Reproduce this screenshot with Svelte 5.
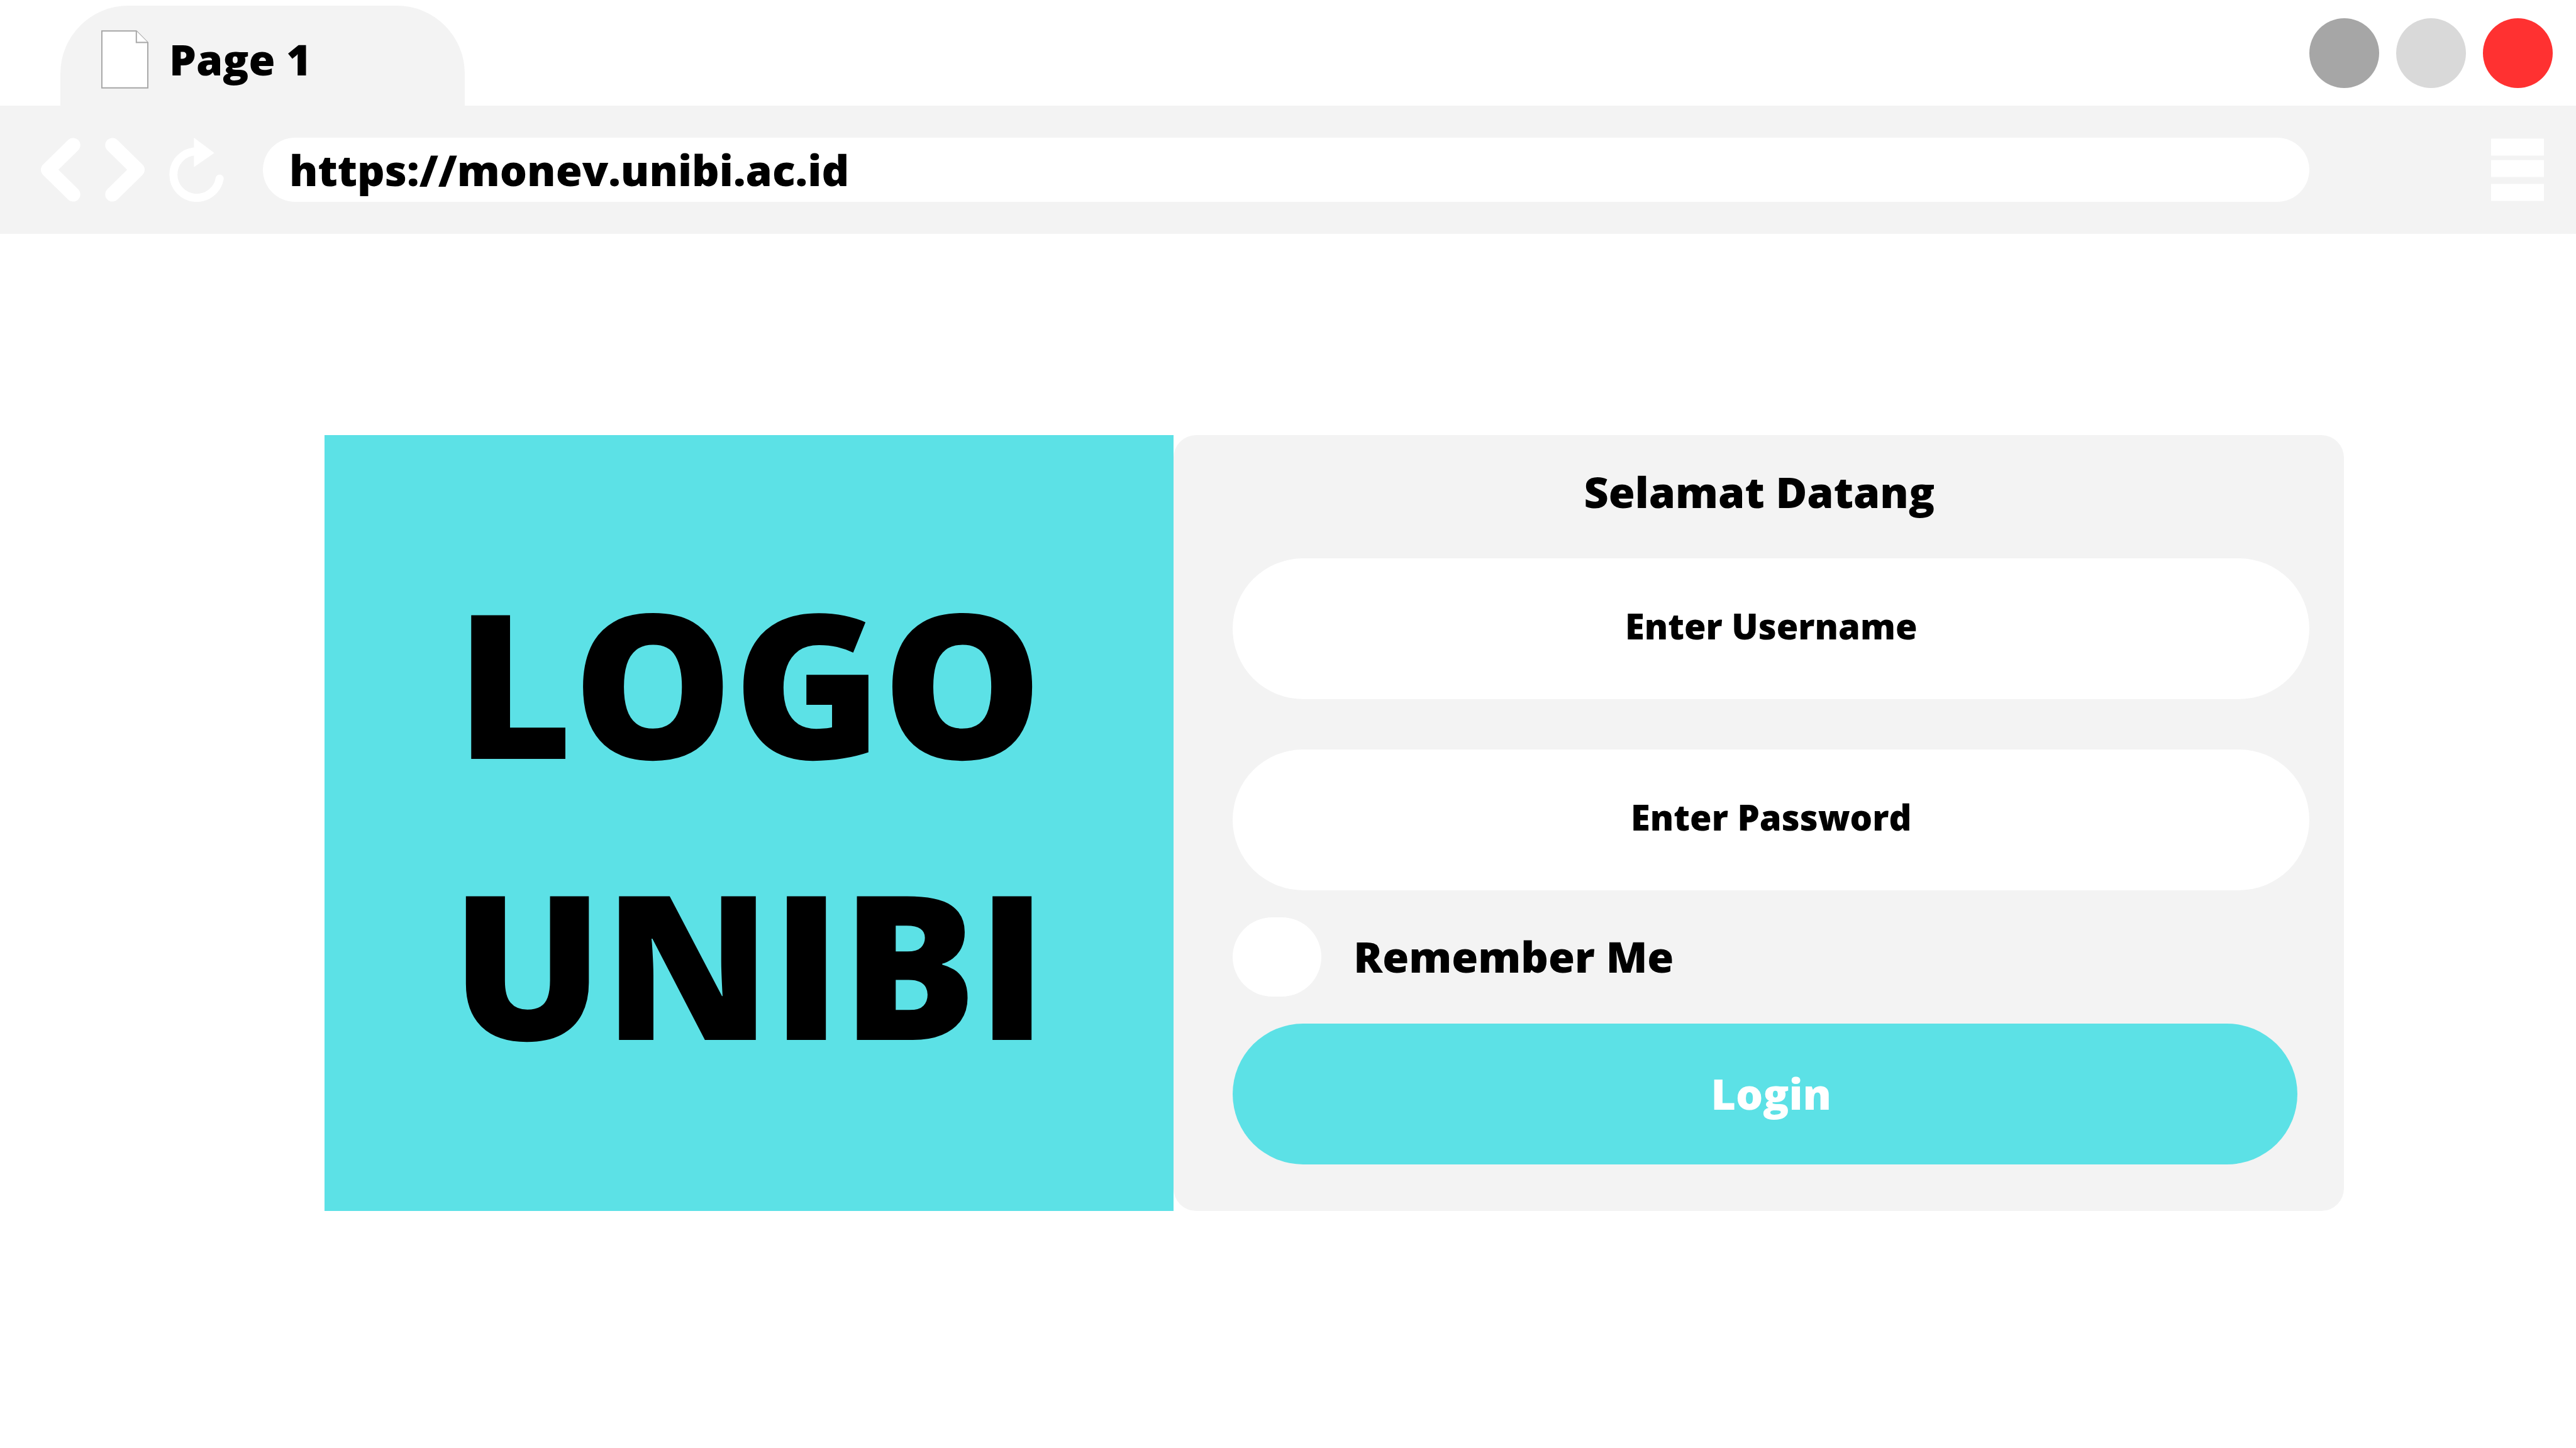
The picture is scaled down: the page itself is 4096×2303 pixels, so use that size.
<script>
  let address = $state('https://monev.unibi.ac.id');
  let username = $state('');
  let password = $state('');
  let remember = $state(false);
</script>

<div class="browser">
  <header>
    <div class="tabs">
      <button class="tab" type="button">
        <svg class="page-icon" viewBox="0 0 78 96" aria-hidden="true">
          <path d="M1 1H58L77 20V95H1Z" />
          <path d="M58 1V20H77" />
        </svg>
        <span>Page 1</span>
      </button>
      <div class="window-controls">
        <button class="dot minimize" type="button" aria-label="Minimize"></button>
        <button class="dot maximize" type="button" aria-label="Maximize"></button>
        <button class="dot close" type="button" aria-label="Close"></button>
      </div>
    </div>

    <nav class="toolbar" aria-label="Browser">
      <div class="nav-buttons">
        <button type="button" aria-label="Back">
          <svg class="chevron" viewBox="0 0 66 106"><path d="M53.7 12L12 53L53.7 94" /></svg>
        </button>
        <button type="button" aria-label="Forward">
          <svg class="chevron" viewBox="0 0 66 106"><path d="M12.3 12L54 53L12.3 94" /></svg>
        </button>
        <button type="button" aria-label="Reload">
          <svg class="reload" viewBox="0 0 90.4 106">
            <path class="arc" d="M41 22.7A38.5 38.5 0 1 0 83.4 67.7" />
            <path class="head" d="M41 0L74.6 25.3L41 48.7Z" />
          </svg>
        </button>
      </div>
      <input class="address" type="text" aria-label="Address" bind:value={address} />
      <button type="button" aria-label="Menu">
        <svg class="menu" viewBox="0 0 84 102">
          <rect y="1.5" width="84" height="27" />
          <rect y="35.5" width="84" height="27" />
          <rect y="73.5" width="84" height="27" />
        </svg>
      </button>
    </nav>
  </header>

  <main>
    <div class="logo">LOGO<br />UNIBI</div>
    <form class="panel" onsubmit={(e) => e.preventDefault()}>
      <h1>Selamat Datang</h1>
      <div class="fields">
        <input class="field" type="text" placeholder="Enter Username" aria-label="Enter Username" bind:value={username} />
        <input class="field" type="password" placeholder="Enter Password" aria-label="Enter Password" bind:value={password} />
      </div>
      <label class="remember">
        <input type="checkbox" bind:checked={remember} />
        <span>Remember Me</span>
      </label>
      <button class="login" type="submit">Login</button>
    </form>
  </main>
</div>

<style>
  :global(body) {
    margin: 0;
    background: #fff;
  }

  .browser {
    min-height: 100vh;
    color: #000;
    font-family: 'Open Sans', sans-serif;
    font-size: 68px;
    font-weight: 800;
    line-height: 96px;
  }

  button,
  input {
    box-sizing: border-box;
    margin: 0;
    padding: 0;
    border: 0;
    background: none;
    color: inherit;
    font: inherit;
  }

  button {
    cursor: pointer;
  }

  svg {
    display: block;
  }

  .tabs {
    display: flex;
    justify-content: space-between;
    align-items: flex-end;
    padding: 9px 37px 0 96px;
  }

  .tab {
    display: flex;
    align-items: center;
    gap: 33px;
    width: 643px;
    height: 159px;
    padding: 11px 65px 0;
    border-radius: 108px 108px 0 0;
    background: #f3f3f3;
  }

  .page-icon {
    width: 75px;
    height: 93px;
    fill: #fff;
    stroke: #a6a6a6;
    stroke-width: 2;
  }

  .window-controls {
    display: flex;
    gap: 27px;
    padding-bottom: 28px;
  }

  .dot {
    width: 111px;
    height: 111px;
    border-radius: 50%;
  }

  .minimize {
    background: #a6a6a6;
  }

  .maximize {
    background: #d9d9d9;
  }

  .close {
    background: #ff3131;
  }

  .toolbar {
    display: flex;
    align-items: center;
    padding: 51px 51px 51px 65px;
    background: #f3f3f3;
  }

  .nav-buttons {
    display: flex;
    gap: 39px;
  }

  .chevron {
    width: 63px;
    height: 102px;
    fill: none;
    stroke: #fff;
    stroke-width: 24;
    stroke-linecap: round;
    stroke-linejoin: round;
  }

  .reload {
    width: 87px;
    height: 102px;
  }

  .arc {
    fill: none;
    stroke: #fff;
    stroke-width: 13.4;
    stroke-linecap: round;
  }

  .head,
  .menu {
    fill: #fff;
  }

  .menu {
    width: 84px;
    height: 102px;
  }

  .address {
    flex: 1;
    min-width: 0;
    height: 102px;
    margin: 0 289px 0 62px;
    padding: 0 42px 2px;
    border-radius: 51px;
    background: #fff;
  }

  main {
    display: grid;
    grid-template-columns: 1350fr 1861fr;
    padding: 320px 9% 160px 12.6%;
  }

  .logo {
    display: flex;
    align-items: center;
    justify-content: center;
    padding-bottom: 4px;
    background: #5ce1e6;
    font-size: 320px;
    line-height: 447px;
    text-align: center;
  }

  .panel {
    padding: 42px 55px 74px 94px;
    border-radius: 36px;
    background: #f3f3f3;
  }

  h1 {
    margin: 0 38px 58px 0;
    font-size: inherit;
    font-weight: inherit;
    text-align: center;
  }

  .fields {
    display: grid;
    gap: 80px;
  }

  .field {
    width: 100%;
    height: 224px;
    padding: 0 112px 10px;
    border-radius: 112px;
    background: #fff;
    font-size: 56px;
    text-align: center;
  }

  .field::placeholder {
    color: #000;
    opacity: 1;
  }

  .remember {
    display: flex;
    align-items: center;
    gap: 51px;
    margin: 43px 0;
  }

  .remember span {
    padding-bottom: 2px;
  }

  .remember input {
    appearance: none;
    width: 141px;
    height: 126px;
    border-radius: 63px;
    background: #fff;
  }

  .remember input:checked {
    background: #5ce1e6;
  }

  .login {
    display: block;
    width: calc(100% - 19px);
    height: 224px;
    padding: 0 0 2px 19px;
    border-radius: 112px;
    background: #5ce1e6;
    color: #fff;
    text-align: center;
  }
</style>
